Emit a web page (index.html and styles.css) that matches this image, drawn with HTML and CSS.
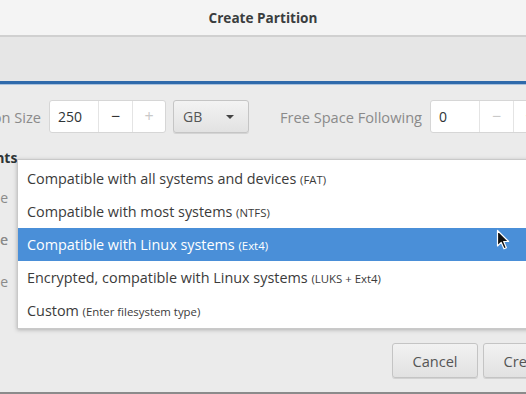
FILE: index.html
```html
<!DOCTYPE html>
<html lang="en">
<head>
    <meta charset="UTF-8">
    <meta name="viewport" content="width=device-width, initial-scale=1.0">
    <title>Create Partition</title>
    <link rel="stylesheet" href="styles.css">
</head>
<body>
    <div class="dialog">
        <div class="titlebar">Create Partition</div>
        <div class="strip"></div>

        <div class="content">
            <div class="size-row">
                <label class="field-label size-label">Partition Size</label>
                <div class="spin">
                    <span class="spin-value">250</span>
                    <span class="spin-btn">&minus;</span>
                    <span class="spin-btn disabled">+</span>
                </div>
                <div class="combo">
                    <span>GB</span>
                    <span class="combo-arrow"></span>
                </div>
                <label class="field-label free-label">Free Space Following</label>
                <div class="spin">
                    <span class="spin-value">0</span>
                    <span class="spin-btn disabled">&minus;</span>
                    <span class="spin-btn">+</span>
                </div>
            </div>

            <div class="section-title">Contents</div>
            <div class="hidden-rows">
                <div class="hidden-row">Volume Name</div>
                <div class="hidden-row">Erase</div>
                <div class="hidden-row">Type</div>
            </div>

            <div class="actions">
                <button class="btn">Cancel</button>
                <button class="btn">Create</button>
            </div>
        </div>

        <!-- filesystem type dropdown, open over the form -->
        <ul class="menu">
            <li class="menu-item">Compatible with all systems and devices <small>(FAT)</small></li>
            <li class="menu-item">Compatible with most systems <small>(NTFS)</small></li>
            <li class="menu-item selected">Compatible with Linux systems <small>(Ext4)</small></li>
            <li class="menu-item">Encrypted, compatible with Linux systems <small>(LUKS + Ext4)</small></li>
            <li class="menu-item">Custom <small>(Enter filesystem type)</small></li>
        </ul>

        <svg class="cursor" width="14" height="22" viewBox="0 0 14 22">
            <path d="M1.5 1.5 L1.5 17 L5.2 13.4 L8 19.8 L10.4 18.8 L7.7 12.5 L12.6 12.5 Z" fill="#111" stroke="#fff" stroke-width="1.2" stroke-linejoin="round"/>
        </svg>
    </div>
</body>
</html>
```

FILE: styles.css
```css
* { margin: 0; padding: 0; box-sizing: border-box; }
body {
    font-family: 'Open Sans', 'Noto Sans', sans-serif;
    font-size: 14px;
    color: #2e3436;
    background: #ebebeb;
    width: 526px;
    height: 394px;
    overflow: hidden;
}
.dialog {
    position: relative;
    height: 394px;
    border-bottom: 2px solid #8b8b8b;
    overflow: hidden;
}
.titlebar {
    height: 37px;
    line-height: 35px;
    text-align: center;
    font-weight: bold;
    font-size: 13.6px;
    background: #f4f4f4;
    border-bottom: 2px solid #d0d0d0;
    color: #3a3d3e;
}
.strip {
    height: 47px;
    background: #e6e6e6;
    border-bottom: 3px solid #2f6aab;
    box-shadow: 0 1px 0 #a9c1dc;
}
.content {
    padding-top: 16px;
}
.size-row {
    display: flex;
    align-items: center;
    white-space: nowrap;
    height: 33px;
}
.field-label {
    color: #8a8a8a;
    font-size: 14.6px;
    flex-shrink: 0;
}
.size-label {
    width: 110px;
    margin-left: -69px;
    text-align: right;
    margin-right: 8px;
}
.free-label {
    margin-left: 31px;
    margin-right: 7px;
    width: 143px;
}
.spin {
    display: flex;
    height: 33px;
    background: #fff;
    border: 1px solid #d6d6d6;
    border-radius: 3px;
    flex-shrink: 0;
}
.spin-value {
    width: 48px;
    padding-left: 8px;
    line-height: 31px;
    color: #2e3436;
}
.spin-btn {
    width: 34px;
    border-left: 1px solid #e4e4e4;
    text-align: center;
    line-height: 30px;
    font-size: 16px;
    color: #333;
}
.spin-btn:last-child { width: 33px; }
.spin-btn.disabled { color: #c9c9c9; }
.combo {
    display: flex;
    align-items: center;
    justify-content: space-between;
    width: 76px;
    height: 33px;
    margin-left: 7px;
    padding: 0 14px 0 9px;
    background: linear-gradient(#f3f3f3, #e2e2e2);
    border: 1px solid #c5c5c5;
    border-radius: 3px;
    box-shadow: 0 1px 0 #d4d4d4;
    color: #555;
    flex-shrink: 0;
}
.combo-arrow {
    width: 0;
    height: 0;
    border-left: 4px solid transparent;
    border-right: 4px solid transparent;
    border-top: 4px solid #444;
}
.section-title {
    font-weight: bold;
    margin-top: 17px;
    margin-left: -46px;
    line-height: 16px;
}
.hidden-rows {
    margin-top: 11px;
}
.hidden-row {
    height: 42px;
    line-height: 42px;
    width: 80px;
    margin-left: -72px;
    text-align: right;
    color: #8a8a8a;
}
.actions {
    display: flex;
    justify-content: flex-end;
    gap: 5px;
    margin-top: 40px;
    margin-right: -43px;
}
.btn {
    width: 86px;
    height: 35px;
    font-family: inherit;
    font-size: 14.6px;
    color: #555;
    background: linear-gradient(#f2f2f2, #e1e1e1);
    border: 1px solid #c4c4c4;
    border-radius: 3px;
    box-shadow: 0 1px 0 #d2d2d2;
}
.menu {
    position: absolute;
    left: 17px;
    top: 159px;
    width: 540px;
    list-style: none;
    background: #fff;
    border: 1px solid #c9c9c9;
    padding: 2px 0 1px;
    box-shadow: 0 1px 4px rgba(0, 0, 0, 0.25);
}
.menu-item {
    height: 33px;
    line-height: 33px;
    padding-left: 9px;
    font-size: 14.4px;
    color: #3b3b3b;
    white-space: nowrap;
}
.menu-item small {
    font-size: 11.4px;
}
.menu-item.selected {
    background: #4a8fd8;
    color: #fff;
}
.cursor {
    position: absolute;
    left: 496px;
    top: 229px;
}
```
